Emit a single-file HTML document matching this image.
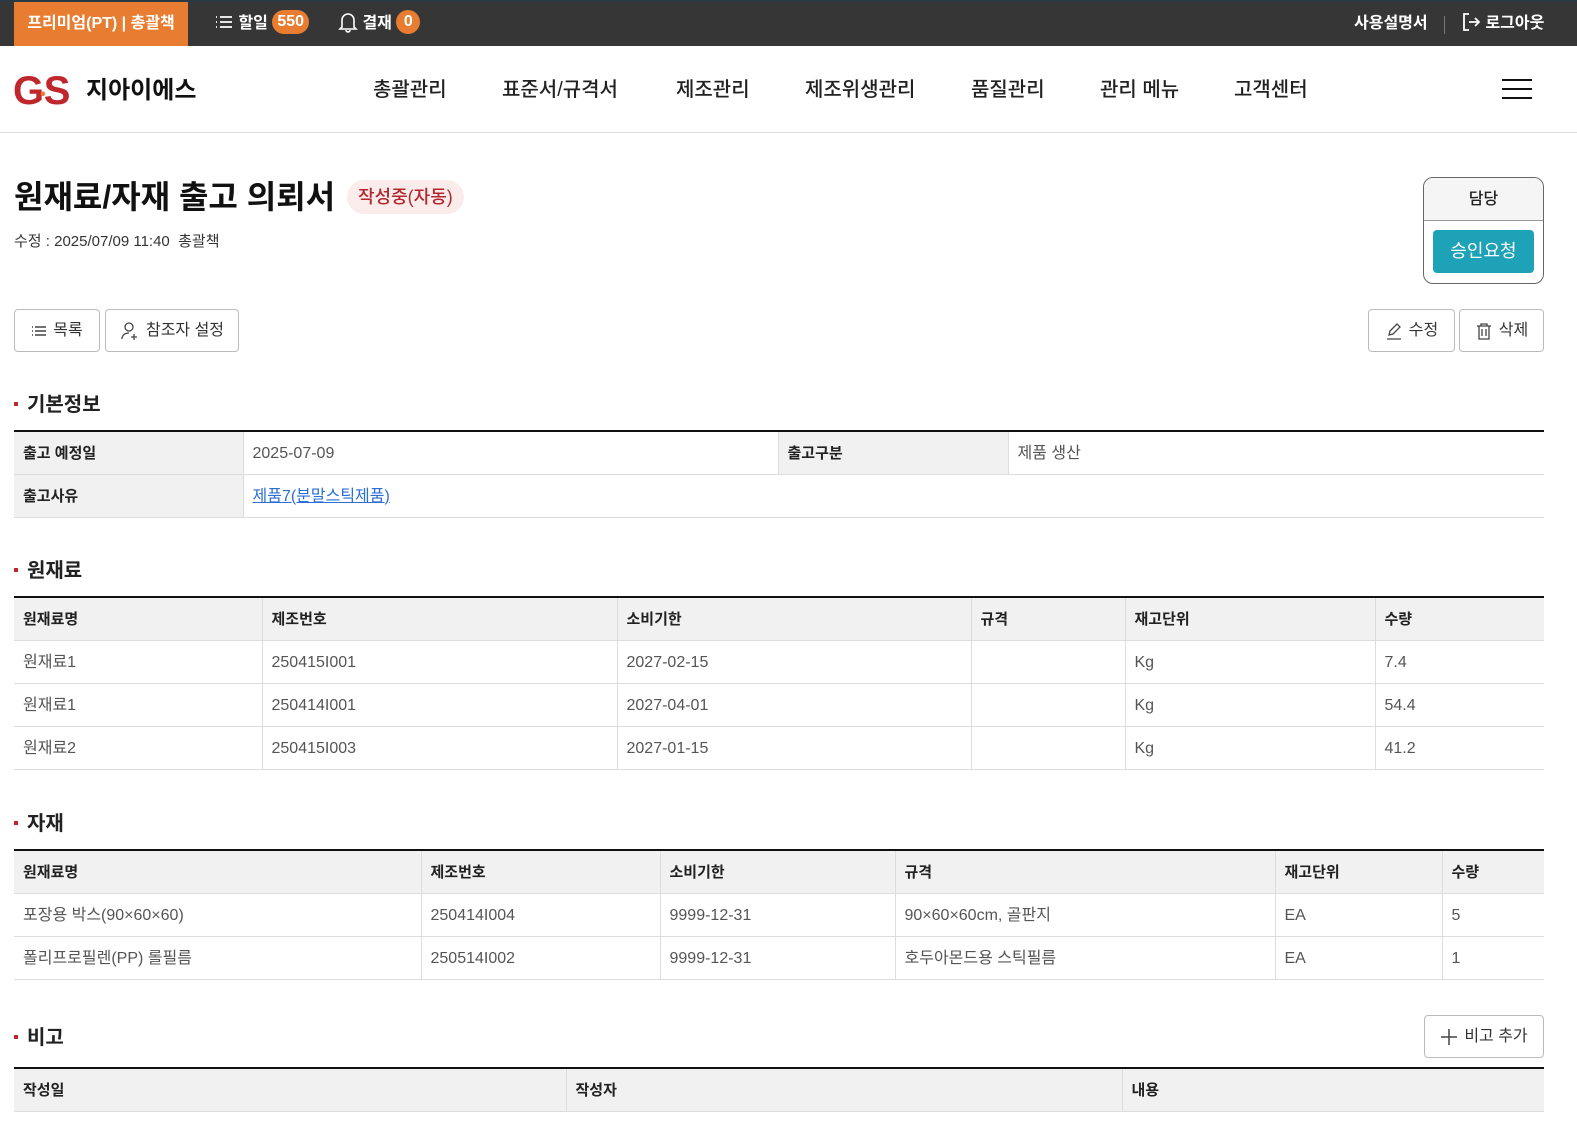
<!DOCTYPE html>
<html><head><meta charset="utf-8"><style>
*{box-sizing:border-box;margin:0;padding:0}
body{width:1577px;height:1148px;overflow:hidden;background:#fff;font-family:"Liberation Sans","Noto Sans CJK KR",sans-serif;color:#222;position:relative;line-height:1.2}
.top{position:absolute;left:0;top:0;width:1577px;height:46px;background:#363636;border-top:2px solid #2a3a44}
.tab{position:absolute;left:14px;top:0;width:174px;height:44px;background:#e87c30;color:#fff;font-weight:bold;font-size:16px;line-height:44px;text-align:center}
.ti{position:absolute;top:0;height:44px;line-height:44px;color:#fff;font-weight:bold;font-size:16px}
.badge{display:inline-block;background:#e87c30;color:#fff;border-radius:12px;height:24px;line-height:24px;padding:0 5px;font-size:16px;vertical-align:middle;margin-top:-3px}
.hdr{position:absolute;left:0;top:46px;width:1577px;height:87px;border-bottom:1px solid #ddd}
.nav{position:absolute;top:31px;font-size:20px;font-weight:500;color:#222;line-height:26px}
.abs{position:absolute}
.btn{position:absolute;height:43px;border:1px solid #bbb;border-radius:4px;background:#fff;font-size:16px;color:#333;display:flex;align-items:center;justify-content:center;gap:6px}
.sec{position:absolute;left:14px;font-size:20px;font-weight:bold;color:#222;line-height:26px}
.sec:before{content:"";display:inline-block;width:4px;height:4px;background:#c0272d;margin-right:9px;vertical-align:middle;position:relative;top:-2px}
table{position:absolute;left:14px;width:1530px;border-collapse:collapse;table-layout:fixed;border-top:2px solid #111}
td,th{height:43px;padding:2px 9px 0;font-size:16px;line-height:20px;text-align:left;border-bottom:1px solid #ddd;border-left:1px solid #ddd;color:#555;font-weight:normal;vertical-align:middle}
td span,th span{display:inline-block;line-height:20px}
th{background:#f1f1f1;color:#222;font-weight:bold;font-size:15px}
tr td:first-child,tr th:first-child{border-left:none}
</style></head><body>
<div class="top">
<div class="tab">프리미엄(PT) | 총괄책</div>
<div class="ti" style="left:214px">
<svg width="20" height="14" viewBox="0 0 20 14" style="vertical-align:middle;margin-top:-3px"><g stroke="#fff" stroke-width="1.8"><path d="M2 2h1M2 7h1M2 12h1M6 2h12M6 7h12M6 12h12"/></g></svg> 할일 <span class="badge">550</span></div>
<div class="ti" style="left:338px">
<svg width="20" height="22" viewBox="0 0 20 22" style="vertical-align:middle;margin-top:-3px"><path d="M4 16V9a6 6 0 0 1 12 0v7l2 2H2z M8 19a2 2 0 0 0 4 0" fill="none" stroke="#fff" stroke-width="1.6"/></svg> 결재 <span class="badge" style="width:24px;padding:0;text-align:center">0</span></div>
<div class="ti" style="left:1354px">사용설명서</div>
<div class="abs" style="left:1444px;top:14px;width:1px;height:18px;background:#777"></div>
<div class="ti" style="left:1461px"><svg width="20" height="20" viewBox="0 0 20 20" style="vertical-align:middle;margin-top:-3px"><path d="M8 2H3v16h5M8 10h10M14 6l4 4-4 4" fill="none" stroke="#fff" stroke-width="1.8"/></svg> 로그아웃</div>
</div>
<div class="hdr">
<div class="abs" style="left:13px;top:24px;font-size:40px;font-weight:900;color:#c0272d;letter-spacing:-4px;line-height:42px;font-family:'Liberation Sans',sans-serif">G<span style="color:#e87c30;font-size:16px;vertical-align:top;position:relative;top:4px;letter-spacing:-2px">•</span>S</div>
<div class="abs" style="left:86px;top:30px;font-size:24px;font-weight:bold;color:#111;line-height:30px">지아이에스</div>
<div class="nav" style="left:373px">총괄관리</div>
<div class="nav" style="left:502px">표준서/규격서</div>
<div class="nav" style="left:676px">제조관리</div>
<div class="nav" style="left:805px">제조위생관리</div>
<div class="nav" style="left:971px">품질관리</div>
<div class="nav" style="left:1100px">관리 메뉴</div>
<div class="nav" style="left:1234px">고객센터</div>
<div class="abs" style="left:1502px;top:33px;width:30px;height:2px;background:#111;box-shadow:0 9px 0 #111,0 18px 0 #111"></div>
</div>
<div class="abs" style="left:14px;top:177px;font-size:32px;font-weight:bold;color:#111;line-height:40px">원재료/자재 출고 의뢰서</div>
<div class="abs" style="left:347px;top:180px;height:34px;line-height:34px;padding:0 11px;border-radius:17px;background:#fbecec;color:#b3262e;font-size:18px;font-weight:500">작성중(자동)</div>
<div class="abs" style="left:14px;top:232px;font-size:15px;color:#333;line-height:20px">수정 : 2025/07/09 11:40&nbsp; 총괄책</div>
<div class="abs" style="left:1423px;top:177px;width:121px;height:107px;border:1px solid #666;border-radius:10px;overflow:hidden">
<div style="height:43px;background:#f5f5f5;border-bottom:1px solid #999;text-align:center;line-height:43px;font-size:16px;font-weight:500">담당</div>
<div style="margin:9px 9px 0;height:43px;background:#1ea2b7;border-radius:4px;color:#fff;text-align:center;line-height:43px;font-size:18px">승인요청</div>
</div>
<div class="btn" style="left:14px;top:309px;width:86px"><svg width="16" height="12"><g stroke="#444" stroke-width="1.4"><path d="M1 2h1M1 6h1M1 10h1M4 2h11M4 6h11M4 10h11"/></g></svg>목록</div>
<div class="btn" style="left:105px;top:309px;width:134px"><svg width="20" height="20" viewBox="0 0 20 20"><circle cx="9" cy="6" r="4" fill="none" stroke="#444" stroke-width="1.3"/><path d="M2 18c0-4 3-6 7-6M14 13v6M11 16h6" fill="none" stroke="#444" stroke-width="1.3"/></svg>참조자 설정</div>
<div class="btn" style="left:1368px;top:309px;width:87px"><svg width="18" height="18" viewBox="0 0 18 18"><path d="M4 13l1-4 7-7 3 3-7 7zM2 17h14" fill="none" stroke="#444" stroke-width="1.3"/></svg>수정</div>
<div class="btn" style="left:1459px;top:309px;width:85px"><svg width="18" height="18" viewBox="0 0 18 18"><path d="M2 4h14M6 4V2h6v2M4 4v13h10V4M7 7v7M11 7v7" fill="none" stroke="#444" stroke-width="1.3"/></svg>삭제</div>
<div class="sec" style="top:392px">기본정보</div>
<table style="top:430px"><colgroup><col style="width:229px"><col style="width:535px"><col style="width:230px"><col></colgroup>
<tr><th>출고 예정일</th><td>2025-07-09</td><th>출고구분</th><td>제품 생산</td></tr>
<tr><th>출고사유</th><td colspan="3"><span style="color:#2a6fd6;text-decoration:underline">제품7(분말스틱제품)</span></td></tr>
</table>
<div class="sec" style="top:558px">원재료</div>
<table style="top:596px"><colgroup><col style="width:248px"><col style="width:355px"><col style="width:354px"><col style="width:154px"><col style="width:250px"><col></colgroup>
<tr><th>원재료명</th><th>제조번호</th><th>소비기한</th><th>규격</th><th>재고단위</th><th>수량</th></tr>
<tr><td>원재료1</td><td>250415I001</td><td>2027-02-15</td><td></td><td>Kg</td><td>7.4</td></tr>
<tr><td>원재료1</td><td>250414I001</td><td>2027-04-01</td><td></td><td>Kg</td><td>54.4</td></tr>
<tr><td>원재료2</td><td>250415I003</td><td>2027-01-15</td><td></td><td>Kg</td><td>41.2</td></tr>
</table>
<div class="sec" style="top:811px">자재</div>
<table style="top:849px"><colgroup><col style="width:407px"><col style="width:239px"><col style="width:235px"><col style="width:380px"><col style="width:167px"><col></colgroup>
<tr><th>원재료명</th><th>제조번호</th><th>소비기한</th><th>규격</th><th>재고단위</th><th>수량</th></tr>
<tr><td>포장용 박스(90×60×60)</td><td>250414I004</td><td>9999-12-31</td><td>90×60×60cm, 골판지</td><td>EA</td><td>5</td></tr>
<tr><td>폴리프로필렌(PP) 롤필름</td><td>250514I002</td><td>9999-12-31</td><td>호두아몬드용 스틱필름</td><td>EA</td><td>1</td></tr>
</table>
<div class="sec" style="top:1025px">비고</div>
<div class="btn" style="left:1424px;top:1015px;width:120px"><svg width="18" height="18"><path d="M9 1v16M1 9h16" stroke="#444" stroke-width="1.5"/></svg>비고 추가</div>
<table style="top:1067px"><colgroup><col style="width:552px"><col style="width:556px"><col></colgroup>
<tr><th>작성일</th><th>작성자</th><th>내용</th></tr>
</table>
</body></html>
